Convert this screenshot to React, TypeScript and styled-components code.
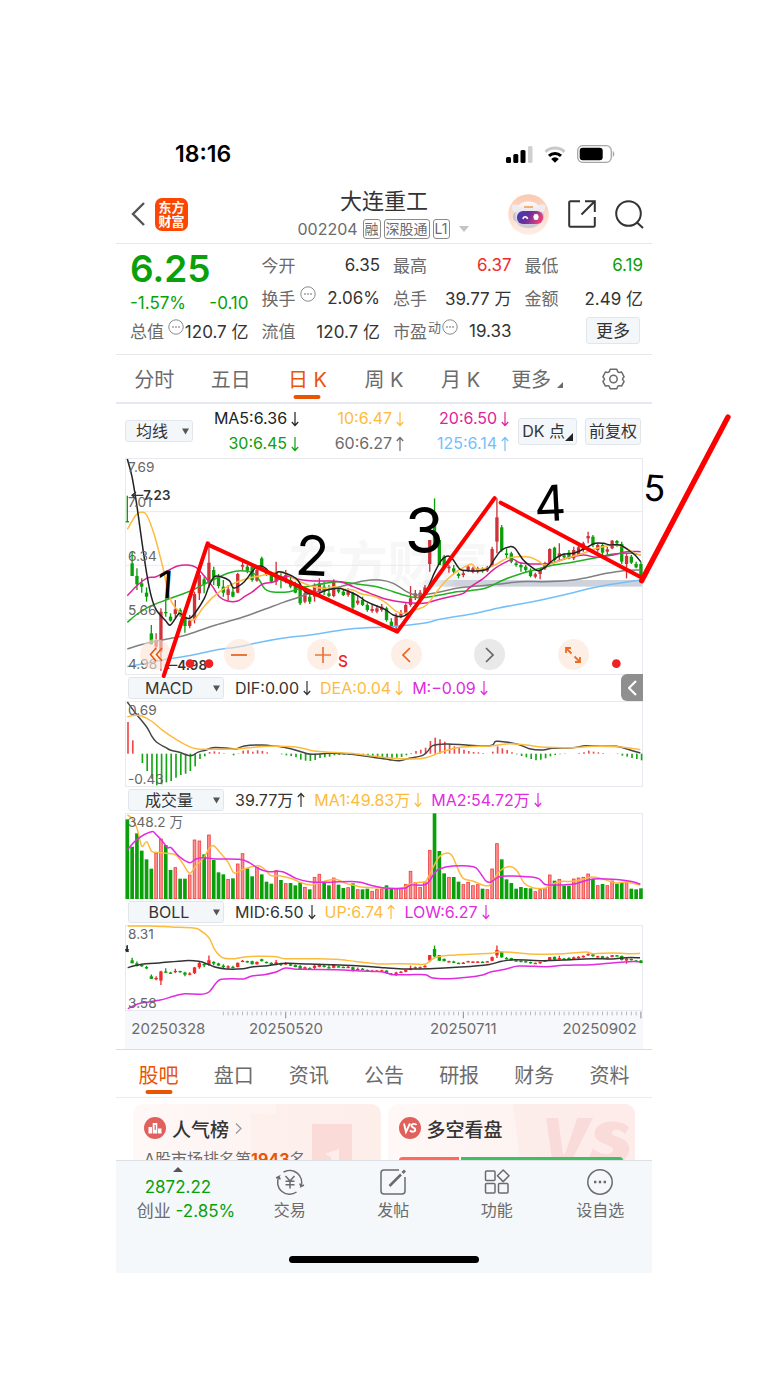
import React from "react";
import styled, { createGlobalStyle } from "styled-components";

const GREEN = "#0aa00a";
const RED = "#f02b2b";
const ORANGE = "#ea5504";
const AMBER = "#fdbb3e";
const MAGENTA = "#e0229a";
const VIOLET = "#e02be0";
const BLUE = "#74bff8";
const INK = "#333333";
const GREY = "#6b6b6b";

const GlobalStyle = createGlobalStyle`
  *, *::before, *::after { box-sizing: border-box; }
  body {
    margin: 0;
    background: #ffffff;
    color: ${INK};
    font-family: Inter, "Noto Sans CJK SC", sans-serif;
    font-size: 17px;
  }
  button, select { font: inherit; color: inherit; margin: 0; }
  button { padding: 0; border: 0; background: none; cursor: pointer; }
  a { color: inherit; text-decoration: none; }
  svg { display: block; flex: none; }
`;

/* ---------- data ---------- */

type Point = [number, number];

const STEP = 14.4;
const barX = (i: number) => 34 + STEP * i;
const shift = (points: Point[], dx: number): Point[] => points.map(([x, y]) => [x + dx, y]);

// Catmull-Rom spline through the points, written as cubic segments.
const smooth = (p: Point[]) => {
  let d = `M${p[0][0]} ${p[0][1]}`;
  for (let i = 0; i < p.length - 1; i++) {
    const a = p[i - 1] || p[i];
    const b = p[i];
    const c = p[i + 1];
    const e = p[i + 2] || c;
    d += `C${(b[0] + (c[0] - a[0]) / 6).toFixed(1)} ${(b[1] + (c[1] - a[1]) / 6).toFixed(1)} ${(c[0] - (e[0] - b[0]) / 6).toFixed(1)} ${(c[1] - (e[1] - b[1]) / 6).toFixed(1)} ${c[0].toFixed(1)} ${c[1]}`;
  }
  return d;
};

// Trading days that closed higher than they opened.
const RISING = new Set([
  6, 7, 10, 13, 14, 15, 17, 21, 23, 24, 27, 31, 33, 37, 39, 40, 43, 46, 48, 51, 52, 53, 56, 57, 58, 59, 60, 61, 62, 63,
  67, 70, 71, 72, 73, 75, 76, 77, 85, 86, 87, 88, 90, 93, 94, 95, 96, 98, 100, 101, 104,
]);

// [high, body top, body bottom, low] for each trading day
const CANDLES: [number, number, number, number][] = [
  [137, 213, 217, 217], [305, 340, 378, 378], [355, 378, 403, 420], [385, 400, 410, 428], [412, 428, 440, 455],
  [525, 550, 583, 583], [550, 570, 590, 600], [475, 485, 605, 662], [445, 486, 490, 500], [490, 500, 512, 515],
  [450, 478, 492, 505], [475, 480, 490, 500], [490, 500, 528, 548], [495, 512, 528, 535], [425, 432, 508, 520],
  [360, 375, 430, 450], [380, 388, 403, 430], [275, 338, 400, 415], [350, 360, 382, 405], [372, 380, 408, 415],
  [390, 410, 428, 440], [405, 418, 435, 452], [410, 425, 440, 442], [368, 372, 428, 430], [335, 345, 350, 362],
  [345, 350, 362, 370], [345, 350, 390, 395], [355, 360, 392, 395], [320, 325, 350, 355], [355, 360, 372, 378],
  [365, 373, 395, 400], [335, 365, 395, 405], [370, 380, 388, 415], [360, 375, 395, 400], [380, 390, 410, 415],
  [395, 402, 428, 430], [400, 415, 460, 465], [420, 430, 455, 460], [430, 440, 455, 462], [400, 410, 440, 455],
  [385, 400, 425, 430], [395, 410, 425, 435], [405, 430, 438, 442], [388, 395, 438, 442], [410, 418, 425, 430],
  [420, 425, 435, 438], [415, 425, 435, 440], [425, 430, 473, 485], [435, 452, 460, 465], [440, 450, 465, 468],
  [460, 465, 480, 485], [462, 477, 483, 488], [465, 475, 485, 490], [462, 470, 480, 485], [470, 475, 510, 515],
  [505, 515, 530, 535], [490, 500, 530, 545], [480, 490, 500, 505], [460, 465, 490, 495], [408, 445, 465, 470],
  [420, 430, 440, 450], [420, 428, 445, 450], [405, 412, 432, 435], [270, 270, 342, 365], [145, 190, 290, 300],
  [270, 270, 345, 345], [315, 320, 350, 355], [345, 350, 355, 368], [345, 355, 365, 372], [368, 372, 378, 385],
  [360, 370, 375, 382], [345, 350, 362, 365], [350, 355, 365, 370], [350, 355, 362, 370], [352, 358, 364, 368],
  [348, 352, 362, 366], [290, 297, 345, 350], [145, 202, 275, 310], [225, 232, 300, 305], [295, 310, 315, 325],
  [305, 310, 335, 340], [335, 340, 345, 350], [338, 345, 352, 365], [345, 350, 360, 368], [355, 362, 378, 382],
  [368, 373, 380, 385], [358, 360, 372, 388], [335, 340, 355, 360], [295, 297, 338, 342], [290, 293, 330, 340],
  [280, 310, 320, 330], [310, 316, 322, 330], [300, 308, 325, 328], [290, 300, 325, 330], [285, 292, 315, 318],
  [275, 280, 300, 305], [245, 258, 265, 280], [255, 260, 285, 292], [280, 285, 300, 305], [280, 285, 308, 315],
  [290, 298, 305, 315], [270, 272, 295, 298], [270, 273, 280, 290], [275, 282, 335, 342], [310, 318, 342, 385],
  [315, 320, 338, 342], [335, 342, 352, 355], [335, 342, 375, 378],
];

const VOLUMES = [
  239, 157, 197, 145, 119, 91, 139, 181, 162, 87, 95, 61, 61, 73, 178, 175, 134, 193, 117, 80, 74, 60, 62, 106, 137, 92,
  68, 96, 74, 52, 46, 86, 57, 47, 48, 41, 50, 36, 29, 66, 75, 50, 41, 64, 43, 33, 35, 47, 29, 29, 31, 24, 29, 31, 41, 32,
  32, 32, 45, 84, 50, 36, 52, 147, 257, 144, 77, 66, 66, 52, 44, 51, 41, 44, 31, 29, 91, 167, 119, 59, 48, 31, 36, 33, 32,
  23, 29, 32, 73, 55, 60, 40, 40, 61, 64, 66, 76, 60, 41, 45, 41, 55, 46, 50, 52, 31, 29, 32,
];

const MACD_BARS = [
  95, 40, 0, -28, -52, -75, -95, -92, -86, -82, -72, -64, -60, -52, -38, -16, -8, 5, 7, 4, 1, 0, -5, 1, 9, 10, 6, 10, 8, 4,
  0, 0, -2, -5, -7, -11, -18, -21, -22, -19, -13, -11, -9, -5, -4, -3, -4, -4, -6, -7, -8, -9, -10, -12, -12, -13, -12,
  -10, -5, 2, 8, 12, 18, 38, 48, 43, 36, 30, 22, 17, 12, 8, 5, 4, 2, 0, 6, 22, 16, 11, 4, -2, -7, -11, -16, -20, -18, -14,
  -8, -4, -2, -1, 0, 0, 2, 4, 9, 6, 4, 2, 0, 0, -1, -6, -9, -13, -16, -20,
];

const threeParts = (a: Point[], b: Point[], c: Point[]) => [...a, ...shift(b, 522), ...shift(c, 1062)];
const twoParts = (a: Point[], b: Point[]) => [...a, ...shift(b, 810)];

const MA5 = threeParts(
  [[34, 27], [48, 80], [63, 170], [77, 270], [92, 370], [106, 440], [121, 480], [149, 512], [163, 525], [185, 495], [192, 490], [207, 502], [221, 505], [235, 492], [265, 445], [279, 408], [295, 380], [315, 380], [340, 392], [351, 413], [365, 410], [385, 395], [405, 370], [423, 350], [445, 352], [470, 375], [490, 365]],
  [[18, 385], [45, 425], [80, 432], [110, 420], [145, 415], [165, 420], [200, 435], [230, 455], [260, 468], [285, 478], [310, 495], [335, 500], [355, 490], [380, 460], [410, 420], [435, 365], [455, 330], [475, 318], [490, 330], [510, 358], [535, 362]],
  [[30, 362], [55, 355], [75, 325], [95, 300], [120, 290], [135, 295], [160, 330], [190, 355], [205, 362], [225, 352], [250, 330], [280, 313], [310, 310], [345, 295], [375, 280], [400, 280], [420, 285], [450, 285], [475, 300], [495, 315], [512, 335]]
);
const MA10 = threeParts(
  [[34, 238], [60, 195], [77, 187], [92, 195], [115, 255], [140, 350], [160, 440], [180, 475], [215, 505], [235, 508], [260, 475], [290, 442], [330, 412], [380, 390], [430, 378], [470, 370], [500, 365]],
  [[20, 390], [60, 407], [100, 415], [135, 410], [165, 418], [190, 420], [215, 432], [255, 440], [290, 460], [320, 485], [345, 490], [375, 480], [410, 465], [440, 425], [470, 390], [500, 365], [525, 350], [545, 342]],
  [[20, 357], [50, 355], [75, 345], [110, 325], [145, 320], [180, 322], [205, 333], [225, 345], [260, 335], [290, 325], [340, 310], [380, 295], [430, 285], [465, 292], [490, 308], [512, 315]]
);
const MA20 = threeParts(
  [[34, 437], [65, 405], [92, 385], [120, 380], [150, 365], [185, 348], [215, 345], [240, 352], [265, 378], [290, 410], [310, 440], [335, 453], [365, 453], [385, 440], [410, 425], [440, 402], [475, 395], [510, 378]],
  [[20, 387], [60, 392], [100, 393], [150, 395], [190, 410], [240, 430], [290, 448], [340, 457], [400, 460], [440, 450], [480, 440], [520, 430]],
  [[0, 412], [40, 385], [75, 355], [110, 335], [130, 328], [150, 338], [200, 342], [240, 340], [290, 325], [340, 315], [380, 322], [430, 315], [470, 305], [512, 305]]
);
const MA30 = threeParts(
  [[34, 517], [60, 495], [100, 470], [150, 450], [200, 432], [240, 415], [290, 390], [340, 368], [375, 362], [410, 368], [430, 390], [445, 415], [465, 425], [520, 425]],
  [[40, 412], [90, 403], [140, 395], [200, 402], [260, 410], [310, 425], [360, 440], [400, 443], [450, 435], [500, 425]],
  [[0, 422], [50, 413], [100, 390], [150, 372], [200, 358], [250, 345], [300, 338], [370, 325], [430, 312], [480, 310], [512, 315]]
);
const MA60 = threeParts(
  [[34, 597], [80, 583], [120, 573], [200, 558], [240, 545], [300, 525], [370, 505], [440, 480], [500, 458]],
  [[20, 444], [60, 430], [110, 420], [170, 405], [220, 393], [270, 390], [310, 400], [350, 425], [380, 435], [430, 430], [500, 415]],
  [[0, 410], [80, 403], [150, 395], [220, 395], [290, 392], [350, 383], [410, 370], [460, 362], [512, 360]]
);
const MA125 = threeParts(
  [[34, 650], [90, 640], [150, 628], [230, 615], [300, 600], [370, 590], [440, 575], [520, 562]],
  [[60, 555], [180, 537], [300, 530], [400, 520], [450, 508], [540, 493]],
  [[30, 487], [90, 473], [180, 457], [280, 435], [370, 413], [430, 402], [512, 390]]
);

const DIF = twoParts(
  [[34, 80], [60, 115], [92, 155], [106, 180], [121, 200], [150, 217], [165, 225], [190, 231], [215, 240], [230, 240], [245, 231], [270, 224], [290, 217], [330, 218], [360, 221], [385, 212], [440, 209], [480, 213], [510, 217], [535, 223], [560, 231], [585, 237], [640, 234], [700, 236], [740, 241], [780, 247]],
  [[10, 253], [40, 256], [70, 249], [110, 240], [125, 228], [140, 211], [180, 206], [240, 209], [300, 212], [320, 209], [330, 198], [360, 200], [400, 208], [430, 220], [470, 224], [500, 219], [560, 217], [600, 211], [650, 213], [690, 213], [730, 223], [763, 233]]
);
const DEA = twoParts(
  [[34, 124], [60, 120], [77, 122], [106, 137], [140, 165], [180, 192], [220, 214], [240, 220], [270, 222], [350, 221], [400, 217], [460, 213], [540, 215], [600, 228], [700, 234], [770, 242]],
  [[10, 248], [80, 251], [120, 247], [150, 236], [190, 223], [230, 215], [320, 211], [370, 205], [420, 209], [480, 216], [560, 217], [620, 213], [690, 214], [730, 218], [763, 223]]
);
const VOL_MA1 = twoParts(
  [[34, 420], [48, 430], [63, 460], [77, 513], [92, 500], [106, 528], [120, 532], [150, 535], [180, 540], [200, 565], [221, 595], [240, 572], [262, 550], [280, 520], [293, 512], [310, 530], [335, 560], [352, 592], [365, 592], [385, 582], [425, 572], [445, 582], [465, 602], [490, 602], [530, 612], [560, 625], [585, 630], [605, 625], [655, 613], [690, 625], [730, 635], [770, 638]],
  [[3, 640], [50, 638], [70, 628], [100, 622], [118, 620], [130, 600], [145, 570], [160, 545], [185, 534], [200, 545], [215, 580], [232, 610], [260, 618], [290, 630], [310, 631], [325, 610], [345, 585], [375, 575], [395, 590], [415, 625], [440, 638], [475, 640], [490, 632], [520, 620], [560, 619], [590, 613], [620, 606], [650, 612], [690, 624], [720, 621], [763, 630]]
);
const VOL_MA2 = twoParts(
  [[34, 525], [63, 493], [106, 470], [120, 478], [140, 500], [155, 518], [165, 518], [190, 545], [221, 563], [240, 552], [265, 548], [300, 552], [370, 553], [400, 563], [430, 582], [460, 590], [500, 590], [540, 610], [580, 620], [620, 622], [720, 620], [770, 632]],
  [[3, 640], [55, 640], [75, 630], [120, 628], [145, 595], [160, 582], [200, 573], [262, 575], [280, 590], [300, 618], [315, 621], [340, 605], [380, 603], [450, 608], [465, 617], [475, 627], [490, 630], [560, 628], [620, 612], [700, 614], [740, 620], [763, 628]]
);

const widen = (points: Point[]): Point[] => points.map(([x, y]) => [x * 1.033, y]);
const BOLL_UP = widen([[34, 80], [100, 80], [160, 83], [225, 86], [243, 92], [270, 115], [285, 148], [300, 168], [315, 177], [345, 178], [375, 173], [410, 171], [465, 172], [492, 178], [580, 178], [640, 180], [700, 187], [770, 194], [830, 193], [880, 195], [900, 194], [915, 182], [930, 174], [965, 168], [1060, 163], [1090, 162], [1115, 157], [1170, 161], [1215, 165], [1300, 163], [1365, 158], [1385, 163], [1440, 161], [1485, 163], [1522, 162]]);
const BOLL_MID = widen([[34, 205], [60, 198], [80, 194], [125, 191], [200, 184], [240, 186], [270, 196], [290, 204], [320, 209], [370, 208], [400, 202], [440, 199], [492, 192], [560, 194], [650, 197], [700, 199], [780, 205], [840, 209], [910, 208], [1000, 203], [1080, 196], [1120, 186], [1160, 181], [1240, 184], [1300, 182], [1380, 178], [1440, 179], [1480, 175], [1522, 175]]);
const BOLL_LOW = widen([[34, 328], [70, 312], [125, 303], [170, 290], [200, 283], [245, 285], [270, 278], [290, 252], [305, 240], [340, 238], [370, 239], [395, 230], [430, 226], [465, 218], [492, 206], [535, 210], [640, 211], [710, 215], [770, 217], [805, 226], [850, 226], [898, 226], [920, 236], [970, 238], [1020, 234], [1065, 227], [1090, 217], [1130, 210], [1170, 200], [1250, 202], [1300, 198], [1380, 196], [1440, 191], [1490, 187], [1522, 187]]);
const bollY = (y: number) => 111 + (y - 24) * 0.2283;

/* ---------- layout ---------- */

const Page = styled.div`
  overflow-x: hidden;
  padding: 130px 0 120px;
`;
const Phone = styled.main`
  width: 100%;
  max-width: 536px;
  margin: 0 auto;
`;
const StatusBar = styled.div`
  display: flex;
  align-items: center;
  justify-content: space-between;
  height: 48px;
  padding: 0 37px 0 59px;
`;
const Clock = styled.time`
  color: #000;
  font-size: 23px;
  font-weight: 600;
`;
const StatusIcons = styled.div`
  display: flex;
  align-items: center;
  gap: 11px;
`;

const Header = styled.header`
  display: grid;
  grid-template-columns: 1fr auto 1fr;
  align-items: center;
  padding: 8px 8px 1px;
  border-bottom: 1px solid #e8e8ea;
`;
const HeaderSide = styled.div<{ $end?: boolean }>`
  display: flex;
  align-items: center;
  gap: ${(p) => (p.$end ? 19 : 10)}px;
  justify-content: ${(p) => (p.$end ? "flex-end" : "flex-start")};
  padding-left: ${(p) => (p.$end ? 0 : 7)}px;
`;
const Logo = styled.div`
  width: 33px;
  height: 33px;
  padding-top: 2px;
  border-radius: 7px;
  background: #fe4600;
  color: #fff;
  font-size: 13px;
  font-weight: 700;
  line-height: 14px;
  text-align: center;
`;
const Title = styled.h1`
  margin: 0;
  font-size: 22px;
  font-weight: 400;
  line-height: 30px;
  text-align: center;
`;
const SubTitle = styled.div`
  display: flex;
  align-items: center;
  gap: 3px;
  height: 26px;
  color: ${GREY};
  font-size: 16px;
`;
const Code = styled.span`
  margin-right: 2px;
`;
const Badge = styled.span`
  padding: 0 1px;
  border: 1px solid #8a8a8a;
  border-radius: 3px;
  font-size: 14px;
  line-height: 18px;
`;

const Quote = styled.section`
  display: grid;
  grid-template-columns: repeat(4, 1fr);
  gap: 13px;
  padding: 4px 9px 7px 14px;
  border-bottom: 1px solid #e8e8ea;
`;
const QuoteColumn = styled.dl`
  margin: 0;
  color: ${INK};
`;
const QuoteRow = styled.div`
  display: flex;
  align-items: center;
  justify-content: space-between;
  height: 33px;
  white-space: nowrap;
`;
const Term = styled.dt`
  display: flex;
  align-items: center;
  gap: 4px;
  color: ${GREY};
`;
const Value = styled.dd<{ $color?: string }>`
  margin: 0;
  color: ${(p) => p.$color || INK};
`;
const Small = styled.span`
  margin: 0 -3px 8px -3px;
  font-size: 13px;
  line-height: 16px;
`;
const Price = styled.div`
  height: 42px;
  color: ${GREEN};
  font-size: 37px;
  font-weight: 600;
  line-height: 42px;
`;
const Change = styled.div`
  display: flex;
  justify-content: space-between;
  height: 24px;
  color: ${GREEN};
  line-height: 26px;
`;
const BoxButton = styled.button`
  height: 27px;
  padding: 0 9px;
  border: 1px solid #e1e6ec;
  border-radius: 3px;
  background: #f4f7fa;
  color: ${INK};
  line-height: 24px;
  white-space: nowrap;
`;
const MoreButton = styled(BoxButton)`
  margin-left: auto;
  margin-right: 3px;
`;

const Tabs = styled.nav<{ $inset?: boolean }>`
  display: grid;
  grid-template-columns: repeat(7, 1fr);
  height: ${(p) => (p.$inset ? 48 : 49)}px;
  padding: ${(p) => (p.$inset ? "2px 5px 0" : "0")};
  border-bottom: ${(p) => (p.$inset ? "1px solid #ececee" : "2px solid #e6e9f0")};
`;
const Tab = styled.button<{ $active?: boolean }>`
  position: relative;
  display: flex;
  align-items: center;
  justify-content: center;
  gap: 6px;
  color: ${(p) => (p.$active ? ORANGE : GREY)};
  font-size: 20px;
  white-space: nowrap;
  &::after {
    content: "";
    position: absolute;
    bottom: 3px;
    left: 50%;
    width: 27px;
    height: 4px;
    border-radius: 2px;
    background: ${(p) => (p.$active ? ORANGE : "transparent")};
    transform: translateX(-50%);
  }
`;

const AverageBar = styled.div`
  display: flex;
  align-items: center;
  justify-content: space-between;
  height: 54px;
  padding: 0 11px 0 9px;
`;
const Averages = styled.ul`
  display: grid;
  grid-template-columns: repeat(3, 105px);
  margin: 0 8px 0 0;
  padding: 0;
  list-style: none;
`;
const Reading = styled.span<{ $color?: string }>`
  display: flex;
  align-items: center;
  gap: 4px;
  color: ${(p) => p.$color || INK};
  font-size: 16px;
  line-height: 25px;
  white-space: nowrap;
`;
const AverageItem = styled.li`
  display: flex;
  justify-content: flex-end;
`;
const ToolButtons = styled.div`
  display: flex;
  gap: 8px;
  font-size: 16px;
`;
const ToolButton = styled(BoxButton)`
  display: flex;
  align-items: center;
  padding: 0 3px;
`;

const Picker = styled.span<{ $wide?: boolean }>`
  position: relative;
  width: ${(p) => (p.$wide ? 96 : 68)}px;
  margin-right: ${(p) => (p.$wide ? 2 : 0)}px;
  svg {
    position: absolute;
    top: 8px;
    right: 4px;
  }
`;
const PickerSelect = styled.select`
  display: block;
  width: 100%;
  height: 22px;
  padding: 0 14px 0 0;
  border: 1px solid #e1e6ec;
  border-radius: 3px;
  background: #f4f7fa;
  color: ${INK};
  font-size: 16px;
  line-height: 20px;
  text-align: center;
  text-align-last: center;
  appearance: none;
`;

const Charts = styled.section`
  padding: 0 9px;
`;
const Panel = styled.div`
  position: relative;
  border-bottom: 1px solid #e8e9ee;
`;
const Plot = styled.svg`
  width: 100%;
  height: auto;
  font-family: Inter, "Noto Sans CJK SC", sans-serif;
`;
const Annotations = styled(Plot)`
  position: absolute;
  top: 0;
  left: 0;
  z-index: 1;
  overflow: visible;
  pointer-events: none;
`;
const ChartControls = styled.div`
  position: absolute;
  right: 54px;
  bottom: 4px;
  left: 15px;
  display: flex;
  justify-content: space-between;
`;
const RoundButton = styled.button<{ $muted?: boolean }>`
  display: grid;
  place-items: center;
  width: 31px;
  height: 31px;
  border-radius: 50%;
  background: ${(p) => (p.$muted ? "rgba(225,225,225,0.75)" : "rgba(253,228,214,0.6)")};
`;
const IndicatorBar = styled.div`
  position: relative;
  display: flex;
  align-items: center;
  gap: 9px;
  height: 26px;
  padding-left: 3px;
`;
const Collapse = styled.button`
  position: absolute;
  top: -1px;
  right: 0;
  display: grid;
  place-items: center;
  width: 22px;
  height: 27px;
  border-radius: 6px 0 0 6px;
  background: #8f8f8f;
`;
const AxisArea = styled.div`
  background: #f7f8fb;
`;
const Rule = styled.hr`
  margin: 0;
  border: 0;
  border-top: 1px solid #dcdde2;
`;

const Cards = styled.section`
  display: grid;
  grid-template-columns: 1fr 1fr;
  gap: 7px;
  height: 62px;
  padding: 6px 17px 0;
  overflow: hidden;
`;
const Card = styled.article`
  position: relative;
  height: 80px;
  padding: 11px 11px 0;
  overflow: hidden;
  border-radius: 10px;
  background: linear-gradient(90deg, #fef8f6, #fdf0ee);
`;
const CardArt = styled.svg`
  position: absolute;
  top: 0;
  right: 0;
`;
const CardTitle = styled.h2`
  position: relative;
  display: flex;
  align-items: center;
  gap: 6px;
  height: 26px;
  margin: 0;
  font-size: 19px;
  font-weight: 500;
`;
const CardText = styled.p`
  position: relative;
  margin: 6px 0 0;
  color: ${GREY};
  font-size: 16px;
  line-height: 24px;
  strong { color: ${ORANGE}; font-weight: 700; }
`;
const Balance = styled.div`
  position: relative;
  display: grid;
  grid-template-columns: 60fr 161fr;
  gap: 2px;
  margin-top: 16px;
  padding-right: 1px;
`;
const BalanceSide = styled.span<{ $up?: boolean }>`
  height: 7px;
  border-radius: ${(p) => (p.$up ? "4px 0 0 4px" : "0 4px 4px 0")};
  background: ${(p) => (p.$up ? "#ff6a5c" : "#3fbf63")};
`;

const Footer = styled.footer`
  height: 113px;
  border-top: 1px solid #dde1e6;
  background: #f4f8fa;
`;
const FooterGrid = styled.nav`
  display: grid;
  grid-template-columns: 122px repeat(4, 1fr);
  height: 95px;
`;
const IndexLink = styled.a`
  display: flex;
  flex-direction: column;
  align-items: center;
  padding: 6px 0 0 2px;
  color: ${GREEN};
  line-height: 24px;
  white-space: nowrap;
`;
const IndexValue = styled.span`
  margin-top: 3px;
`;
const IndexChange = styled.span`
  padding-left: 16px;
`;
const IndexName = styled.span`
  color: ${GREY};
`;
const FooterLink = styled.a`
  display: flex;
  flex-direction: column;
  align-items: center;
  gap: 2px;
  padding-top: 7px;
  color: ${GREY};
  font-size: 16px;
  line-height: 24px;
`;
const HomeBar = styled.div`
  width: 190px;
  height: 7px;
  margin: 0 auto;
  border-radius: 4px;
  background: #000;
`;

/* ---------- small drawings ---------- */

const Arrow = ({ up }: { up?: boolean }) => (
  <svg width="8" height="16" viewBox="0 0 8 16" fill="none" stroke="currentColor" strokeWidth="1.2">
    <path d={up ? "M4 15V1.500M.8 5 4 1.500 7.200 5" : "M4 1v13.500M.8 11 4 14.500 7.200 11"} />
  </svg>
);
const Caret = () => (
  <svg width="7" height="7" viewBox="0 0 7 7" fill="#555">
    <path d="M0 .5h7L3.500 6.500z" />
  </svg>
);
const CornerMark = styled.svg<{ $lift: number }>`
  align-self: flex-end;
  margin-bottom: ${(p) => p.$lift}px;
`;
const Corner = ({ size, color, lift }: { size: number; color: string; lift: number }) => (
  <CornerMark $lift={lift} width={size} height={size} viewBox="0 0 8 8" fill={color}>
    <path d="M8 0v8H0z" />
  </CornerMark>
);
const DotsMark = styled.svg`
  margin-bottom: 7px;
`;
const Dots = () => (
  <DotsMark width="16" height="16" viewBox="0 0 16 16" fill="none" stroke="#8a8a8a">
    <circle cx="8" cy="8" r="7.2" strokeWidth="1" />
    <path d="M4.200 8h1.600M7.200 8h1.600M10.200 8h1.600" strokeWidth="1.400" />
  </DotsMark>
);
const Signal = () => (
  <svg width="27" height="17" viewBox="0 0 27 17">
    <rect x="0" y="11" width="5" height="6" rx="1.500" />
    <rect x="7.300" y="8" width="5" height="9" rx="1.500" />
    <rect x="14.500" y="4" width="5" height="13" rx="1.500" />
    <rect x="22" y="0" width="4.500" height="17" rx="1.500" fill="#cfcfcf" />
  </svg>
);
const Wifi = () => (
  <svg width="22" height="17" viewBox="0 0 22 17" fill="none">
    <path d="M1.500 5.800a14 14 0 0 1 19 0" stroke="#c9c9c9" strokeWidth="3" />
    <path d="M5 9.800a8.800 8.800 0 0 1 12 0" stroke="#000" strokeWidth="3" />
    <path d="M11 16.800 7.200 12.900a5.400 5.400 0 0 1 7.600 0z" fill="#000" />
  </svg>
);
const Battery = () => (
  <svg width="38" height="18" viewBox="0 0 38 18">
    <rect x=".7" y=".7" width="33.600" height="16.600" rx="5" fill="none" stroke="#a5a5a5" strokeWidth="1.300" />
    <rect x="2.700" y="2.700" width="23" height="12.600" rx="3" />
    <path d="M35.800 6v6c2-.8 2-5.200 0-6z" fill="#a5a5a5" />
  </svg>
);
const Robot = () => (
  <svg width="41" height="41" viewBox="0 0 41 41">
    <defs>
      <linearGradient id="halo" x1="0" y1="0" x2="0" y2="1">
        <stop offset="0" stopColor="#fbc9b0" />
        <stop offset="1" stopColor="#fdeee6" />
      </linearGradient>
      <linearGradient id="visor" x1="0" y1="0" x2="1" y2="0.300">
        <stop offset="0" stopColor="#3a3fae" />
        <stop offset="0.500" stopColor="#6a2f9c" />
        <stop offset="1" stopColor="#e0407a" />
      </linearGradient>
      <linearGradient id="shell" x1="0" y1="0" x2="0" y2="1">
        <stop offset="0" stopColor="#fbfafc" />
        <stop offset="1" stopColor="#c9c6d2" />
      </linearGradient>
    </defs>
    <circle cx="20.500" cy="20.500" r="20.300" fill="url(#halo)" />
    <path d="M4 11c3-1 6 0 8 1l-4 8c-3-2-5-6-4-9zM37 11c-3-1-6 0-8 1l4 8c3-2 5-6 4-9z" fill="#eeecf1" />
    <rect x="5" y="17" width="31" height="11" rx="5" fill="#c4c1ce" />
    <path d="M7.500 23C7 13 12 7.500 20.500 7.500S34 13 33.500 23c0 7-5 11-13 11s-13-4-13-11z" fill="url(#shell)" />
    <rect x="9" y="17" width="26" height="13" rx="6" fill="url(#visor)" />
    <path d="M15 25c.5-3 4-3 4.500 0" fill="none" stroke="#fff" strokeWidth="1.600" />
    <rect x="25.500" y="20" width="5" height="6" rx="2.300" fill="#fff" />
    <path d="M16 13h9" stroke="#f39a4a" strokeWidth="1.500" />
  </svg>
);
const Gear = () => (
  <svg width="23" height="22" viewBox="0 0 23 22" fill="none" stroke={GREY} strokeWidth="1.500" strokeLinejoin="round">
    <path d="M8.200 1.200h6.600l.8 2.200c.3.700 1 1.100 1.700 1l2.300-.4 2.500 4.800-1.200 1.400c-.5.600-.5 1.200 0 1.700l1.200 1.500-2.500 4.700-2.300-.4c-.8-.1-1.400.3-1.700 1l-.8 2.100H8.200l-.8-2.100c-.3-.7-1-1.100-1.700-1l-2.300.4-2.500-4.700 1.200-1.500c.5-.5.5-1.100 0-1.700L.9 8.800 3.400 4l2.300.4c.8.1 1.400-.3 1.700-1z" />
    <circle cx="11.500" cy="11" r="3.700" />
  </svg>
);
const Chevron = ({ flip, color, weight = 2 }: { flip?: boolean; color: string; weight?: number }) => (
  <svg width="9" height="16" viewBox="0 0 9 16" fill="none" stroke={color} strokeWidth={weight}>
    <path d={flip ? "M1 1l7 7-7 7" : "M8 1 1 8l7 7"} />
  </svg>
);

const Candles = ({ y, rise }: { y: (v: number) => number; rise: string }) => (
  <g>
    {CANDLES.map(([high, top, bottom, low], i) => {
      const color = RISING.has(i) ? rise : GREEN;
      return (
        <g key={i} fill={color} stroke={color}>
          <path d={`M${barX(i)} ${y(high)}V${y(low)}`} strokeWidth="4" />
          <rect x={barX(i) - 5} y={y(top)} width="10" height={Math.max(4, y(bottom) - y(top))} stroke="none" />
        </g>
      );
    })}
  </g>
);

const Frame = ({ y, height, grid = [] }: { y: number; height: number; grid?: number[] }) => (
  <g stroke="#e8e9ef" strokeWidth="3" fill="none">
    <rect x="28.500" y={y + 1.5} width="1551" height={height - 3} />
    {grid.map((g) => (
      <path key={g} d={`M27 ${g}H1581`} />
    ))}
  </g>
);

const Curve = ({ points, color }: { points: Point[]; color: string }) => (
  <path d={smooth(points)} fill="none" stroke={color} strokeWidth="4.500" strokeLinejoin="round" />
);

const Dropdown = ({ label, wide }: { label: string; wide?: boolean }) => (
  <Picker $wide={wide}>
    <PickerSelect aria-label={label} defaultValue={label}>
      <option>{label}</option>
    </PickerSelect>
    <Caret />
  </Picker>
);

const AVERAGES = [
  { text: "MA5:6.36", color: "#222222" },
  { text: "10:6.47", color: AMBER },
  { text: "20:6.50", color: MAGENTA },
  { text: "30:6.45", color: GREEN },
  { text: "60:6.27", color: GREY, up: true },
  { text: "125:6.14", color: BLUE, up: true },
];

type ReadingData = { text: string; color?: string; up?: boolean };
const Indicator = ({ name, items, children }: { name: string; items: ReadingData[]; children?: React.ReactNode }) => (
  <IndicatorBar>
    <Dropdown label={name} wide />
    {items.map((r) => (
      <Reading key={r.text} $color={r.color}>
        {r.text}
        <Arrow up={r.up} />
      </Reading>
    ))}
    {children}
  </IndicatorBar>
);

const MainChart = () => (
  <Panel>
    <Plot viewBox="27 24 1554 648" role="img" aria-label="日K">
      <text x="515" y="400" fontSize="150" fontWeight="700" fill="#f7f7f8">东方财富</text>
      <Frame y={24} height={651} grid={[185, 346, 508]} />
      <defs>
        <linearGradient id="band" x1="0" x2="1">
          <stop offset="0" stopColor="#e2e5eb" stopOpacity="0.500" />
          <stop offset="0.150" stopColor="#cdd2dc" />
          <stop offset="1" stopColor="#cdd2dc" />
        </linearGradient>
      </defs>
      <rect x="922" y="390" width="657" height="20" fill="url(#band)" />
      <Candles y={(v) => v} rise="#d0323a" />
      <Curve points={MA125} color={BLUE} />
      <Curve points={MA60} color="#808080" />
      <Curve points={MA30} color="#22b022" />
      <Curve points={MA20} color={MAGENTA} />
      <Curve points={MA10} color={AMBER} />
      <Curve points={MA5} color="#222" />
      <g fontSize="41" fill="#666">
        <text x="36" y="66">7.69</text>
        <text x="36" y="171">7.01</text>
        <text x="36" y="333">6.34</text>
        <text x="36" y="495">5.66</text>
        <text x="36" y="656">4.98</text>
      </g>
      <g fontSize="40" fontWeight="600" fill="#333">
        <text x="82" y="151">7.23</text>
        <text x="184" y="661">4.98</text>
      </g>
      <path d="M82 136H48m12-10-12 10 12 10M184 646h-36m12-10-12 10 12 10" fill="none" stroke="#333" strokeWidth="4" />
      <g fill="#ee2222">
        <circle cx="222" cy="641" r="13" />
        <circle cx="279" cy="641" r="13" />
        <circle cx="1501" cy="641" r="13" />
        <text x="666" y="652" fontSize="46" fontWeight="500">S</text>
      </g>
    </Plot>
    <ChartControls>
      <RoundButton aria-label="最左">
        <svg width="14" height="15" viewBox="0 0 14 15" fill="none" stroke={ORANGE} strokeWidth="1.500">
          <path d="M7 1 1.500 7.500 7 14M13 1 7.500 7.500 13 14" />
        </svg>
      </RoundButton>
      <RoundButton aria-label="缩小">
        <svg width="16" height="16" viewBox="0 0 16 16" stroke="#e9773c" strokeWidth="2">
          <path d="M0 8h16" />
        </svg>
      </RoundButton>
      <RoundButton aria-label="放大">
        <svg width="16" height="16" viewBox="0 0 16 16" stroke="#e9773c" strokeWidth="1.700">
          <path d="M0 8h16M8 0v16" />
        </svg>
      </RoundButton>
      <RoundButton aria-label="左移">
        <Chevron color="#e9661f" weight={1.7} />
      </RoundButton>
      <RoundButton aria-label="右移" $muted>
        <Chevron flip color="#666" weight={1.7} />
      </RoundButton>
      <RoundButton aria-label="全屏">
        <svg width="16" height="16" viewBox="0 0 16 16" fill="none" stroke="#f06a1e" strokeWidth="1.800">
          <path d="M1 6V1h5M1.500 1.500l5 5M15 10v5h-5M14.500 14.500l-5-5" />
        </svg>
      </RoundButton>
    </ChartControls>
    <Annotations viewBox="27 24 1554 648" aria-hidden="true">
      <g fill="none" stroke="#fe0000" strokeWidth="12" strokeLinecap="round" strokeLinejoin="round">
        <path d="M143 678 275 280" />
        <path d="M281 286 844 545 1136 144" />
        <path d="M1154 158 1579 384" />
        <path d="M1577 392 1836-99" strokeWidth="16" />
      </g>
      <g fill="#000" textAnchor="middle" fontSize="165">
        <text x="148" y="445" fontSize="115" transform="rotate(4 148 405)">1</text>
        <text x="589" y="376" transform="rotate(3 589 316)">2</text>
        <text x="925" y="310" fontSize="190">3</text>
        <text x="1302" y="213" fontSize="148" transform="rotate(-3 1302 160)">4</text>
        <text x="1616" y="153" fontSize="108" transform="rotate(4 1616 110)">5</text>
      </g>
    </Annotations>
  </Panel>
);

const MacdChart = () => (
  <Plot viewBox="27 77 1554 258" role="img" aria-label="MACD">
    <Frame y={77} height={258} />
    {MACD_BARS.map((v, i) =>
      v === 0 ? null : (
        <path key={i} d={`M${barX(i) + 2} 235v${-v}`} stroke={v > 0 ? "#f0484a" : "#16a516"} strokeWidth="5" />
      )
    )}
    <Curve points={DIF} color="#444" />
    <Curve points={DEA} color={AMBER} />
    <g fontSize="41" fill="#666">
      <text x="36" y="118">0.69</text>
      <text x="36" y="326">-0.43</text>
    </g>
  </Plot>
);

const VolumeChart = () => (
  <Plot viewBox="27 414 1554 258" role="img" aria-label="成交量">
    <Frame y={414} height={258} />
    {VOLUMES.map((v, i) =>
      RISING.has(i) ? (
        <rect key={i} x={barX(i) - 4} y={673 - v} width="8" height={v - 2} fill="#fb8f8f" stroke="#ef4040" strokeWidth="2.500" />
      ) : (
        <rect key={i} x={barX(i) - 5.5} y={672 - v} width="11" height={v} fill={GREEN} />
      )
    )}
    <Curve points={VOL_MA1} color={AMBER} />
    <Curve points={VOL_MA2} color={VIOLET} />
    <text x="36" y="456" fontSize="41" fill="#666">348.2 万</text>
  </Plot>
);

const BollChart = () => (
  <Plot viewBox="27 77 1554 258" role="img" aria-label="BOLL">
    <Frame y={77} height={258} />
    <Candles y={bollY} rise={RED} />
    <path d="M33 139v16m-5-5 5 6 5-6" fill="none" stroke="#222" strokeWidth="4" />
    <Curve points={BOLL_UP} color={AMBER} />
    <Curve points={BOLL_MID} color="#333" />
    <Curve points={BOLL_LOW} color={VIOLET} />
    <g fontSize="41" fill="#666">
      <text x="36" y="118">8.31</text>
      <text x="36" y="326">3.58</text>
    </g>
  </Plot>
);

const DateAxis = () => (
  <AxisArea>
    <Plot viewBox="27 335 1554 114" role="img" aria-label="日期">
      {Array.from({ length: 88 }, (_, k) => k + 20).map((i) => {
        const major = i === 33 || i === 70 || i === 107;
        return <path key={i} d={`M${barX(i)} 337v${major ? 20 : 11}`} stroke={major ? "#888" : "#b5b5b9"} strokeWidth="3" />;
      })}
      <g fontSize="45" fill="#6b6b6b">
        <text x="46" y="404">20250328</text>
        <text x="510" y="404" textAnchor="middle">20250520</text>
        <text x="1042" y="404" textAnchor="middle">20250711</text>
        <text x="1562" y="404" textAnchor="end">20250902</text>
      </g>
    </Plot>
  </AxisArea>
);

export default function App() {
  return (
    <Page>
      <GlobalStyle />
      <Phone>
        <StatusBar>
          <Clock>18:16</Clock>
          <StatusIcons>
            <Signal />
            <Wifi />
            <Battery />
          </StatusIcons>
        </StatusBar>

        <Header>
          <HeaderSide>
            <button aria-label="返回">
              <svg width="14" height="24" viewBox="0 0 14 24" fill="none" stroke="#555" strokeWidth="2.400">
                <path d="M13 1 2 12l11 11" />
              </svg>
            </button>
            <Logo>东方<br />财富</Logo>
          </HeaderSide>
          <div>
            <Title>大连重工</Title>
            <SubTitle>
              <Code>002204</Code>
              <Badge>融</Badge>
              <Badge>深股通</Badge>
              <Badge>L1</Badge>
              <svg width="18" height="6" viewBox="0 0 18 6" fill="#c4c4c4">
                <path d="M6 0h10l-5 6z" />
              </svg>
            </SubTitle>
          </div>
          <HeaderSide $end>
            <button aria-label="助手"><Robot /></button>
            <button aria-label="分享">
              <svg width="28" height="28" viewBox="0 0 28 28" fill="none" stroke="#333" strokeWidth="2">
                <path d="M12 1.200H2.500A1.300 1.300 0 0 0 1.200 2.500v23a1.300 1.300 0 0 0 1.300 1.300h23a1.300 1.300 0 0 0 1.300-1.300V17M17 1.200h9.800V12M26.500 1.500 13.500 14.500" />
              </svg>
            </button>
            <button aria-label="搜索">
              <svg width="29" height="29" viewBox="0 0 29 29" fill="none" stroke="#333" strokeWidth="2">
                <circle cx="13.500" cy="13.500" r="12.300" />
                <path d="M22 22.500 28 28" />
              </svg>
            </button>
          </HeaderSide>
        </Header>

        <Quote>
          <div>
            <Price>6.25</Price>
            <Change><span>-1.57%</span><span>-0.10</span></Change>
            <QuoteColumn>
              <QuoteRow><Term>总值<Dots /></Term><Value>120.7 亿</Value></QuoteRow>
            </QuoteColumn>
          </div>
          <QuoteColumn>
            <QuoteRow><Term>今开</Term><Value>6.35</Value></QuoteRow>
            <QuoteRow><Term>换手<Dots /></Term><Value>2.06%</Value></QuoteRow>
            <QuoteRow><Term>流值</Term><Value>120.7 亿</Value></QuoteRow>
          </QuoteColumn>
          <QuoteColumn>
            <QuoteRow><Term>最高</Term><Value $color={RED}>6.37</Value></QuoteRow>
            <QuoteRow><Term>总手</Term><Value>39.77 万</Value></QuoteRow>
            <QuoteRow><Term>市盈<Small>动</Small><Dots /></Term><Value>19.33</Value></QuoteRow>
          </QuoteColumn>
          <div>
            <QuoteColumn>
              <QuoteRow><Term>最低</Term><Value $color={GREEN}>6.19</Value></QuoteRow>
              <QuoteRow><Term>金额</Term><Value>2.49 亿</Value></QuoteRow>
            </QuoteColumn>
            <QuoteRow><MoreButton>更多</MoreButton></QuoteRow>
          </div>
        </Quote>

        <Tabs>
          <Tab>分时</Tab>
          <Tab>五日</Tab>
          <Tab $active>日 K</Tab>
          <Tab>周 K</Tab>
          <Tab>月 K</Tab>
          <Tab>更多<Corner size={6} color="#6b6b6b" lift={14} /></Tab>
          <Tab aria-label="设置"><Gear /></Tab>
        </Tabs>

        <AverageBar>
          <Dropdown label="均线" />
          <Averages>
            {AVERAGES.map((a) => (
              <AverageItem key={a.text}>
                <Reading $color={a.color}>{a.text}<Arrow up={a.up} /></Reading>
              </AverageItem>
            ))}
          </Averages>
          <ToolButtons>
            <ToolButton>DK 点<Corner size={8} color="#222" lift={3} /></ToolButton>
            <ToolButton>前复权</ToolButton>
          </ToolButtons>
        </AverageBar>

        <Charts>
          <MainChart />
          <Indicator
            name="MACD"
            items={[{ text: "DIF:0.00" }, { text: "DEA:0.04", color: AMBER }, { text: "M:−0.09", color: VIOLET }]}
          >
            <Collapse aria-label="收起"><Chevron color="#fff" weight={2.2} /></Collapse>
          </Indicator>
          <MacdChart />
          <Indicator
            name="成交量"
            items={[{ text: "39.77万", up: true }, { text: "MA1:49.83万", color: AMBER }, { text: "MA2:54.72万", color: VIOLET }]}
          />
          <VolumeChart />
          <Indicator
            name="BOLL"
            items={[{ text: "MID:6.50" }, { text: "UP:6.74", color: AMBER, up: true }, { text: "LOW:6.27", color: VIOLET }]}
          />
          <BollChart />
          <DateAxis />
        </Charts>
        <Rule />

        <Tabs $inset>
          <Tab $active>股吧</Tab>
          <Tab>盘口</Tab>
          <Tab>资讯</Tab>
          <Tab>公告</Tab>
          <Tab>研报</Tab>
          <Tab>财务</Tab>
          <Tab>资料</Tab>
        </Tabs>

        <Cards>
          <Card>
            <CardArt width="130" height="80" viewBox="0 0 130 80">
              <path d="M0 10h25V0h105v80H0z" fill="#fdece7" opacity="0.600" />
              <path d="M61 20h40v60H61z" fill="#fadbd8" />
              <path d="M74 50l14-5v35h-8V53z" fill="#fdeeeb" />
            </CardArt>
            <CardTitle>
              <svg width="22" height="22" viewBox="0 0 22 22">
                <circle cx="11" cy="11" r="11" fill="#e0605c" />
                <path d="M4.500 10H8v6.500H4.500zM8.700 6h4.600v10.500H8.700zM14 11.500h3.500v5H14z" fill="#fff" />
                <path d="M11.200 8v5" stroke="#e0605c" strokeWidth="1.200" />
              </svg>
              人气榜
              <svg width="7" height="11" viewBox="0 0 7 11" fill="none" stroke="#999" strokeWidth="1.300">
                <path d="M1 .5l5 5-5 5" />
              </svg>
            </CardTitle>
            <CardText>A股市场排名第<strong>1943</strong>名</CardText>
          </Card>
          <Card>
            <CardArt width="122" height="80" viewBox="0 0 122 80">
              <path d="M0 0h122v80H10z" fill="#fdebe9" opacity="0.800" />
              <path d="M33 14h12l5 36h2L64 14h16L56 62H40z" fill="#f9dcda" />
              <path d="M116 24c-4-8-30-10-34 3-4 14 20 12 18 20-2 5-14 4-20-3l-5 12c10 9 38 8 41-9 3-15-20-13-17-19 2-4 10-2 13 2z" fill="#f9dcda" />
            </CardArt>
            <CardTitle>
              <svg width="22" height="22" viewBox="0 0 22 22" fill="none" stroke="#fff" strokeWidth="1.900">
                <circle cx="11" cy="11" r="11" fill="#e0605c" stroke="none" />
                <path d="M5 6.500 7 15l4-8.500M17.500 8c-1-1.800-5-1.400-5 .8 0 2.100 4 1.600 3.800 4-.2 2.200-3.800 2.600-5.300.6" />
              </svg>
              多空看盘
            </CardTitle>
            <Balance>
              <BalanceSide $up />
              <BalanceSide />
            </Balance>
          </Card>
        </Cards>

        <Footer>
          <FooterGrid>
            <IndexLink href="#index">
              <svg width="10" height="5" viewBox="0 0 10 5" fill="#555">
                <path d="M5 0l5 5H0z" />
              </svg>
              <IndexValue>2872.22</IndexValue>
              <IndexChange><IndexName>创业</IndexName> -2.85%</IndexChange>
            </IndexLink>
            <FooterLink href="#trade">
              <svg width="30" height="28" viewBox="0 0 30 28" fill="none" stroke={GREY} strokeWidth="1.500">
                <path d="M8.500 4.200A12 12 0 0 1 26 18.500l3-1.500M21.500 24A12 12 0 0 1 4 8.500L1 10M4 8.500l1.200 3M26 18.500l-1.300-3" />
                <path d="M10.500 8 15 13l4.500-5M15 13v7.500M10.500 13.300h9M10.500 16.800h9" />
              </svg>
              交易
            </FooterLink>
            <FooterLink href="#post">
              <svg width="28" height="28" viewBox="0 0 28 28" fill="none" stroke={GREY} strokeWidth="1.500">
                <path d="M20 2H5a3 3 0 0 0-3 3v18a3 3 0 0 0 3 3h18a3 3 0 0 0 3-3V9" />
                <path d="M10.500 18 22 6.500" strokeWidth="2.500" />
                <path d="M23.500 5 26 2.500" strokeWidth="2.800" />
              </svg>
              发帖
            </FooterLink>
            <FooterLink href="#features">
              <svg width="28" height="28" viewBox="0 0 28 28" fill="none" stroke={GREY} strokeWidth="1.500">
                <rect x="2.500" y="3" width="9.500" height="9.500" rx="1" />
                <rect x="2.500" y="15.500" width="9.500" height="9.500" rx="1" />
                <rect x="15.500" y="15.500" width="9.500" height="9.500" rx="1" />
                <path d="M20.200 2 26 7.800l-5.800 5.800-5.800-5.800z" strokeLinejoin="round" />
              </svg>
              功能
            </FooterLink>
            <FooterLink href="#watchlist">
              <svg width="28" height="28" viewBox="0 0 28 28" fill="none" stroke={GREY} strokeWidth="1.500">
                <circle cx="14" cy="14" r="12.200" />
                <path d="M8 14h2.400M12.800 14h2.400M17.600 14h2.400" strokeWidth="2.400" />
              </svg>
              设自选
            </FooterLink>
          </FooterGrid>
          <HomeBar />
        </Footer>
      </Phone>
    </Page>
  );
}
